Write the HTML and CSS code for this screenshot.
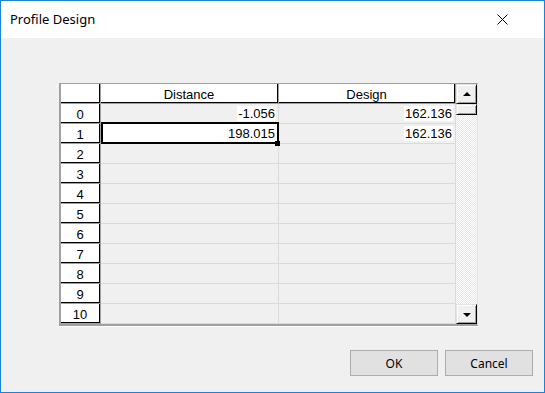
FILE: index.html
```html
<!DOCTYPE html>
<html lang="en">
<head>
    <meta charset="UTF-8">
    <title>Profile Design</title>
    <link rel="stylesheet" href="styles.css">
</head>
<body>
    <div class="window">
        <div class="titlebar">
            <span class="title">Profile Design</span>
            <svg class="close" width="11" height="11" viewBox="0 0 11 11">
                <path d="M0.5 0.5 L10.5 10.5 M10.5 0.5 L0.5 10.5" stroke="#000" stroke-width="1" fill="none"/>
            </svg>
        </div>
        <div class="content">
            <div class="grid-frame">
                <div class="sheet" id="sheet">
                    <div class="row">
                        <div class="rh"><span></span></div>
                        <div class="ch dist"><span>Distance</span></div>
                        <div class="ch design"><span>Design</span></div>
                    </div>
                </div>
                <div class="scrollbar">
                    <div class="sb-btn"><i class="arrow up"></i></div>
                    <div class="thumb"></div>
                    <div class="track"></div>
                    <div class="sb-btn"><i class="arrow down"></i></div>
                </div>
            </div>
            <div class="actions">
                <button>OK</button>
                <button>Cancel</button>
            </div>
        </div>
    </div>

    <script>
        const rows = [
            ["-1.056", "162.136"],
            ["198.015", "162.136"]
        ];
        const sheet = document.getElementById("sheet");
        for (let i = 0; i < 11; i++) {
            const data = rows[i] || ["", ""];
            const sel = i === 1 ? " sel" : "";
            const val = v => v ? `<span>${v}</span>` : "";
            sheet.insertAdjacentHTML("beforeend",
                `<div class="row"><div class="rh"><span>${i}</span></div>` +
                `<div class="cell dist${sel}">${val(data[0])}</div>` +
                `<div class="cell design">${val(data[1])}</div></div>`);
        }
    </script>
</body>
</html>
```

FILE: styles.css
```css
* {
    box-sizing: border-box;
}
body {
    margin: 0;
    font-family: "Liberation Sans", Arial, sans-serif;
    font-size: 13px;
    color: #000;
}
.window {
    width: 545px;
    height: 393px;
    border: 1px solid #1883d7;
    display: flex;
    flex-direction: column;
    background: #f0f0f0;
}
.titlebar {
    height: 37px;
    flex: none;
    background: #fff;
    display: flex;
    align-items: center;
    justify-content: space-between;
    padding: 0 36px 0 9px;
    font-family: "Noto Sans", sans-serif;
    font-size: 13px;
}
.title {
    margin-top: -1px;
}
.content {
    flex: 1;
    display: flex;
    flex-direction: column;
}
.grid-frame {
    margin: 45px 0 0 58px;
    width: 419px;
    display: flex;
    border-style: solid;
    border-width: 1px 1px 2px 2px;
    border-color: #a0a0a0 #e3e3e3 #a0a0a0 #a0a0a0;
    box-shadow: 0 1px 0 #fff;
}
.sheet {
    width: 395px;
    height: 240px;
}
.row {
    display: flex;
    height: 20px;
}
.rh, .ch {
    background: #a0a0a0;
    padding: 0 1px 1px 0;
}
.rh {
    width: 40px;
}
.dist {
    width: 178px;
}
.design {
    width: 177px;
}
.rh span, .ch span {
    display: flex;
    align-items: center;
    justify-content: center;
    height: 100%;
    padding-top: 2px;
    background: #fff;
    border-right: 1px solid #000;
    border-bottom: 1px solid #000;
}
.cell {
    background: #f0f0f0;
    border-right: 1px solid #dadada;
    border-bottom: 1px solid #dadada;
    display: flex;
    align-items: center;
    justify-content: flex-end;
    padding-right: 2px;
}
.cell span {
    background: #fff;
    padding: 1px 1px 0;
    line-height: 14px;
}
.cell.sel {
    background: #fff;
    position: relative;
}
.cell.sel::before {
    content: "";
    position: absolute;
    left: 0;
    right: -1px;
    top: -2px;
    bottom: -1px;
    border: 2px solid #000;
}
.cell.sel::after {
    content: "";
    position: absolute;
    right: -2px;
    bottom: -3px;
    width: 5px;
    height: 5px;
    background: #000;
}
.scrollbar {
    width: 21px;
    height: 240px;
    display: flex;
    flex-direction: column;
}
.sb-btn, .thumb {
    background: #f0f0f0;
    border: 1px solid;
    border-color: #e3e3e3 #000 #000 #e3e3e3;
    box-shadow: inset 1px 1px 0 #fff, inset -1px -1px 0 #a0a0a0;
}
.sb-btn {
    height: 20px;
    display: flex;
    align-items: center;
    justify-content: center;
}
.thumb {
    height: 11px;
}
.track {
    flex: 1;
    background: repeating-conic-gradient(#fff 0 25%, #e6e6e6 0 50%) 0 0 / 2px 2px;
}
.arrow {
    width: 0;
    height: 0;
    border-left: 4px solid transparent;
    border-right: 4px solid transparent;
}
.arrow.up {
    border-bottom: 4px solid #000;
}
.arrow.down {
    border-top: 4px solid #000;
    margin-top: 2px;
}
.actions {
    margin-top: auto;
    display: flex;
    justify-content: flex-end;
    gap: 7px;
    padding: 0 11px 16px 0;
}
.actions button {
    width: 88px;
    height: 26px;
    background: #e1e1e1;
    border: 1px solid #adadad;
    font-family: "Noto Sans", sans-serif;
    font-size: 12px;
    color: #000;
    padding: 0;
}
```
